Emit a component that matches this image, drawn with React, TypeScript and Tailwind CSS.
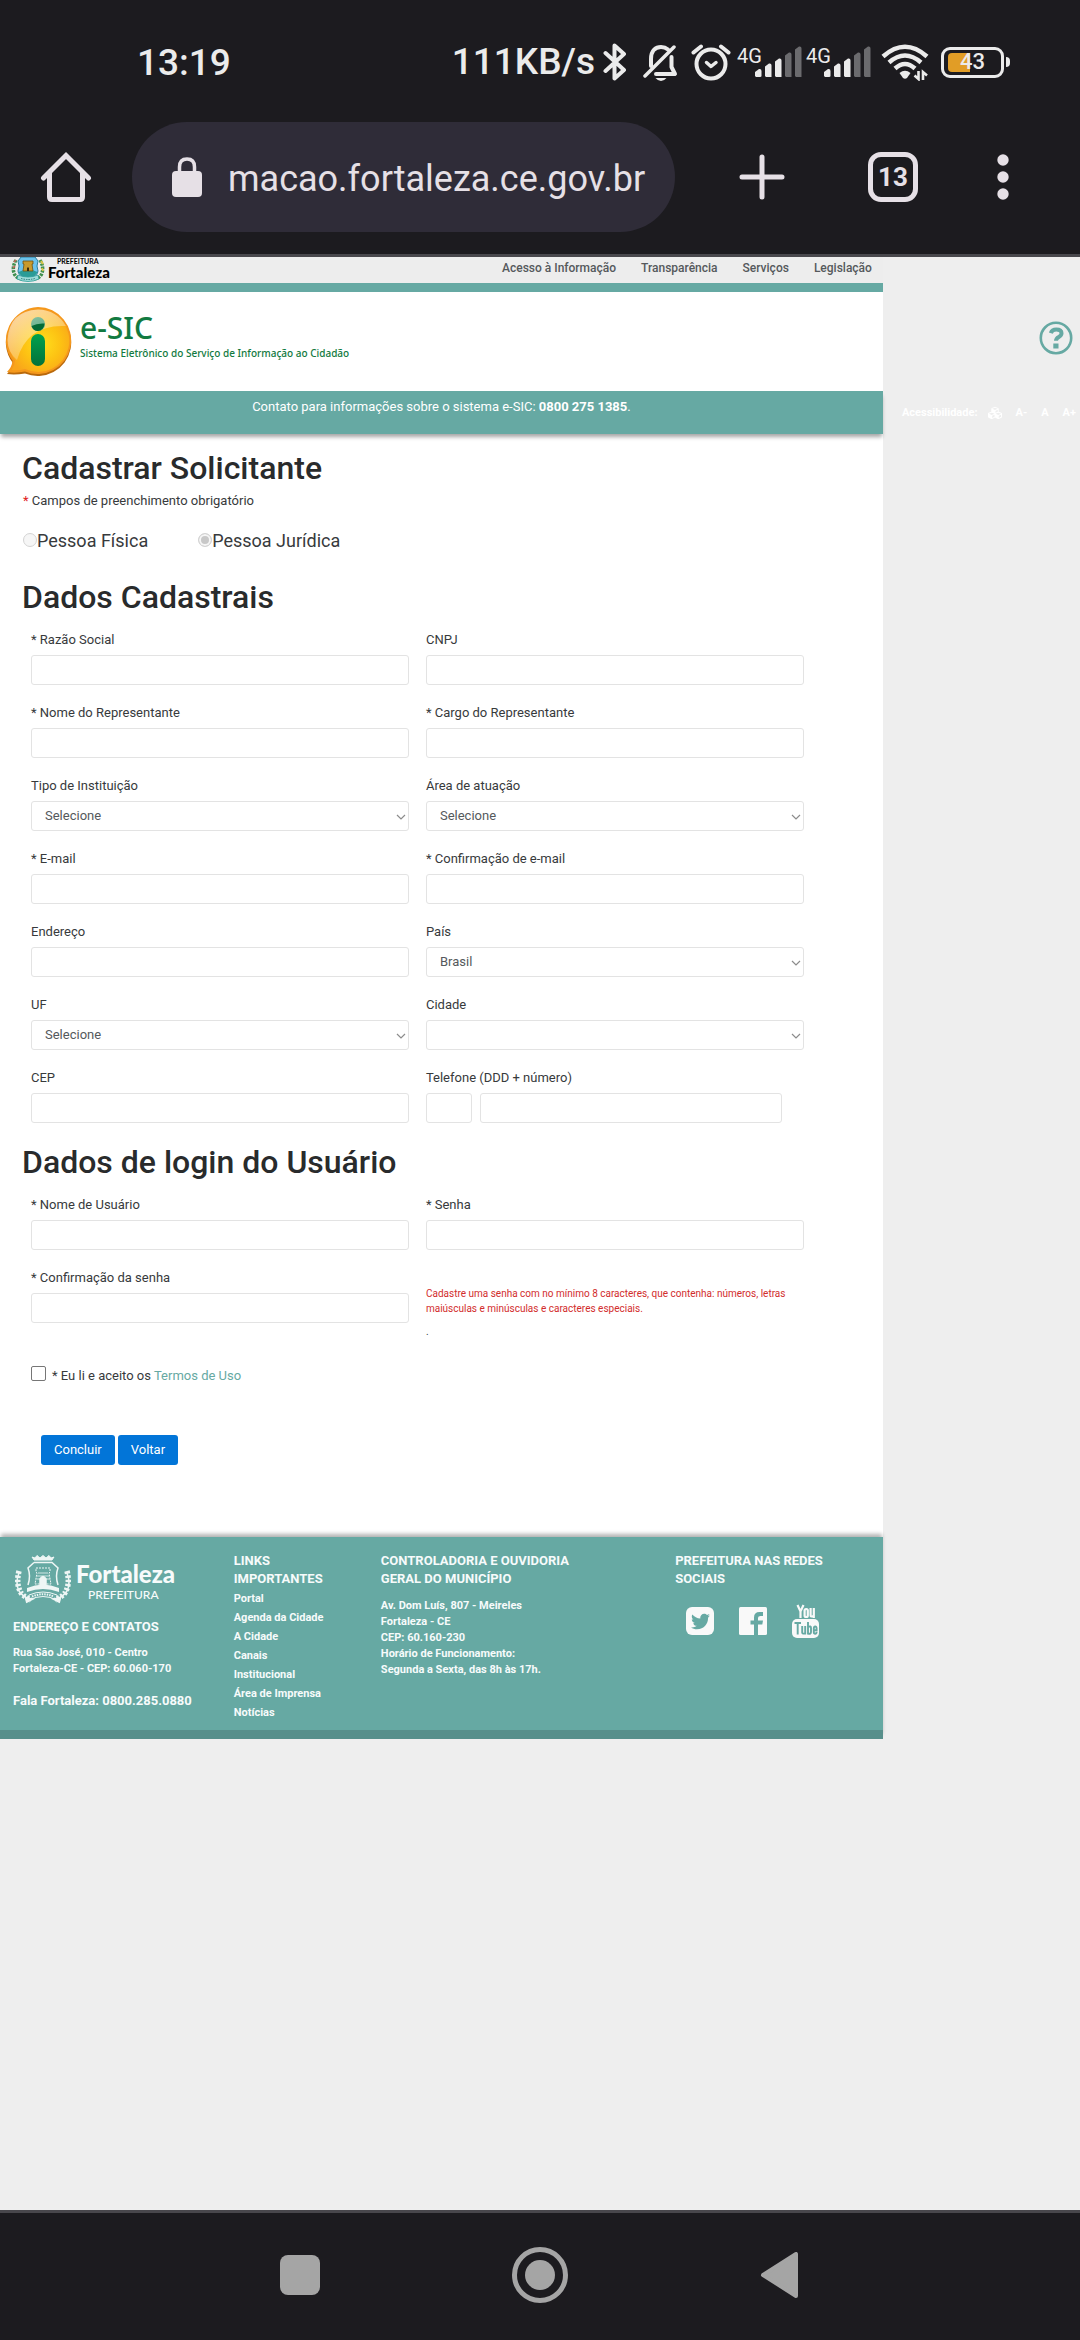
import { useId, type ReactNode } from "react";
import { FaCubes, FaTwitter } from "react-icons/fa";

const teal = "#66a9a3";

function Bluetooth() {
  return (
    <svg viewBox="0 0 24 40" className="ml-2 h-10 w-6 shrink-0" fill="none" stroke="#ebebeb" strokeWidth="4" strokeLinejoin="round" strokeLinecap="round">
      <path d="M2.5 11 L21 28 L11.5 36.500 V3.500 L21 12 L2.500 29" />
    </svg>
  );
}

function BellOff() {
  return (
    <svg viewBox="0 0 36 40" className="ml-4 h-10 w-9 shrink-0" fill="none" stroke="#ebebeb" strokeWidth="4" strokeLinecap="round" strokeLinejoin="round">
      <path d="M8 24 V17 C8 8 13 5 18 5 C21 5 23 5.800 25 7.500" />
      <path d="M31 5 L2 34" strokeWidth="3.500" />
      <path d="M28.500 15 V25 L32 32 H13" />
      <path d="M12.500 36 H23.500 Q21 39 18 39 T12.500 36 Z" fill="#ebebeb" stroke="none" />
    </svg>
  );
}

function Alarm() {
  return (
    <svg viewBox="0 0 40 40" className="ml-3 h-10 w-10 shrink-0" fill="none" stroke="#ebebeb" strokeWidth="4" strokeLinecap="round" strokeLinejoin="round">
      <circle cx="20" cy="22" r="14.500" />
      <path d="M2.500 10.500 L10 4.500 M37.500 10.500 L30 4.500" strokeWidth="4" />
      <path d="M15.500 20.500 L20 24.500 L25 20.500" strokeWidth="3.500" />
    </svg>
  );
}

function Signal() {
  return (
    <span className="ml-1.5 flex h-9 w-[63px] shrink-0 items-start">
      <span className="-mr-2 text-[20px] leading-6">4G</span>
      <svg viewBox="0 0 48 34" className="h-[34px] w-12 shrink-0">
        <path d="M1 32 V28 L5 25 Q7.500 24.500 7.500 27 V32 Q7.500 33 6 33 H2 Z" fill="#ebebeb" />
        <path d="M11 32 V22.500 L15 19.500 Q17.500 19 17.500 21.500 V33 H12 Z" fill="#ebebeb" />
        <path d="M21 32 V17.500 L25 14.500 Q27.500 14 27.500 16.500 V33 H22 Z" fill="#ebebeb" />
        <path d="M31 32 V11.500 L35 8.500 Q37.500 8 37.500 10.500 V33 H32 Z" fill="#6b6b6e" />
        <path d="M41 32 V5.500 L45 2.500 Q47.500 2 47.500 4.500 V33 H42 Z" fill="#6b6b6e" />
      </svg>
    </span>
  );
}

function Wifi() {
  return (
    <svg viewBox="0 0 48 38" className="ml-3 h-[38px] w-12 shrink-0" fill="none" stroke="#ebebeb" strokeWidth="4.500">
      <path d="M2 13.500 Q24 -6 46 13.500" />
      <path d="M8 19.500 Q24 5.500 40 19.500" />
      <path d="M14 25.500 Q24 16.500 34 25.500" />
      <path d="M18.500 30 Q24 25.500 29.500 30 L26 35 Q24 36.500 22 35 Z" fill="#ebebeb" stroke="none" />
      <path d="M37.500 28 V36 L33.500 32.500 M42 37 V29 L46 32.500" strokeWidth="2.600" />
    </svg>
  );
}

function Battery() {
  return (
    <span className="ml-3 flex items-center">
      <span className="relative flex h-[31px] w-[63px] items-center justify-center rounded-[9px] border-[3px] border-[#ebebeb] text-[22px] leading-none">
        <span className="absolute top-[3px] bottom-[3px] left-1 w-[22px] rounded-l-sm bg-[#e19d26]" />
        <span className="relative">43</span>
      </span>
      <span className="ml-0.5 h-2.5 w-1 rounded-r-sm bg-[#ebebeb]" />
    </span>
  );
}

function StatusBar() {
  return (
    <div className="flex h-[122px] items-start justify-between pt-[42px] pr-[70px] pl-[137px] font-medium text-[#ebebeb]">
      <span className="text-[37px] leading-[42px]">13:19</span>
      <div className="flex h-10 items-center">
        <span className="text-[37px] leading-[42px]">111KB/s</span>
        <Bluetooth />
        <BellOff />
        <Alarm />
        <span className="flex font-normal">
          <Signal />
          <Signal />
        </span>
        <Wifi />
        <Battery />
      </div>
    </div>
  );
}

function BrowserBar() {
  return (
    <div className="flex h-[132px] items-start text-[#e6e0e6]">
      <button type="button" aria-label="Página inicial" className="mt-[29px] ml-10">
        <svg viewBox="0 0 52 52" className="h-[52px] w-[52px]" fill="none" stroke="currentColor" strokeWidth="5" strokeLinejoin="round" strokeLinecap="round">
          <path d="M3.500 27 L26 4.500 L48.500 27" strokeLinejoin="miter" />
          <path d="M9.500 22 V46 Q9.500 48.500 12 48.500 H40 Q42.500 48.500 42.500 46 V22" />
        </svg>
      </button>
      <div className="ml-10 flex h-[110px] min-w-0 flex-1 items-center rounded-full bg-[#2f2c38] pr-4 pl-10">
        <svg viewBox="0 0 30 40" className="h-10 w-[30px] shrink-0">
          <path d="M7.500 16 V10 Q7.500 2 15 2 T22.500 10 V16" fill="none" stroke="currentColor" strokeWidth="3.500" />
          <rect x="0" y="14" width="30" height="26" rx="4" fill="currentColor" />
        </svg>
        <input
          type="text"
          aria-label="Endereço do site"
          defaultValue="macao.fortaleza.ce.gov.br"
          className="ml-[26px] min-w-0 flex-1 bg-transparent pt-1 text-[36px] leading-[44px] outline-none"
        />
      </div>
      <button type="button" aria-label="Nova guia" className="mt-8 ml-16">
        <svg viewBox="0 0 46 46" className="h-[46px] w-[46px]" fill="none" stroke="currentColor" strokeWidth="5" strokeLinecap="round">
          <path d="M23 3 V43 M3 23 H43" />
        </svg>
      </button>
      <button type="button" aria-label="Guias abertas" className="mt-[30px] ml-[83px] flex h-[50px] w-[50px] items-center justify-center rounded-[13px] border-[5px] border-current text-[26px] leading-none font-bold">
        13
      </button>
      <button type="button" aria-label="Mais opções" className="mt-8 mr-[70px] ml-[78px]">
        <svg viewBox="0 0 14 46" className="h-[46px] w-[14px]" fill="currentColor">
          <circle cx="7" cy="6" r="5.700" />
          <circle cx="7" cy="23" r="5.700" />
          <circle cx="7" cy="40" r="5.700" />
        </svg>
      </button>
    </div>
  );
}

function ColourCrest() {
  return (
    <svg viewBox="0 0 34 30" className="-mt-1 h-[30px] w-[34px] shrink-0">
      <path d="M5 7 Q1 14 3 20 Q5 26 13 26 M29 7 Q33 14 31 20 Q29 26 21 26" fill="none" stroke="#3f8f4e" strokeWidth="3.500" strokeDasharray="2.500 1" />
      <path d="M3 9 L5 7 M2 15 L4 13" stroke="#c8645a" strokeWidth="1.500" />
      <path d="M30 8 L32 11 M31 15 L32 18" stroke="#d9c545" strokeWidth="2" />
      <path d="M10 4 H24 L27 8 Q25 13 27 18 Q27 23 17 25 Q7 23 7 18 Q9 13 7 8 Z" fill="#6cc3ec" stroke="#2c7f9c" strokeWidth="1" />
      <path d="M7.500 19 Q17 14 26.500 19 Q25 23 17 25 Q9 23 7.500 19 Z" fill="#2a9c97" />
      <path d="M12 8 H22 V11 H21 L22 18 H12 L13 11 H12 Z" fill="#c99a2c" stroke="#6e5314" strokeWidth=".8" />
      <path d="M16 18 V15 Q17 13.500 18 15 V18 Z" fill="#3d2c0a" />
      <path d="M7 22 Q17 26 27 22 L28 26 Q17 31 6 26 Z" fill="#9fdcda" stroke="#2a9c97" strokeWidth=".8" />
      <path d="M10 25.500 Q17 27.500 24 25.500" fill="none" stroke="#247a77" strokeWidth="1" strokeDasharray="1.500 1" />
    </svg>
  );
}

function WhiteCrest() {
  return (
    <svg viewBox="0 0 60 50" className="h-[50px] w-[60px] shrink-0" fill="none" stroke="#eef6f5" strokeWidth="1.500">
      <path d="M19 3 L21 6 H39 L41 3 L38 4 L36 1.500 L33 4 L30 1.500 L27 4 L24 1.500 L22 4 Z" fill="#eef6f5" strokeWidth="1" />
      <path d="M21 8.500 H39 L45 14 Q42 22 45 31 M21 8.500 L15 14 Q18 22 15 31" />
      <path d="M23 14 H37 V18 L36 19 L38 30 H22 L24 19 L23 18 Z" strokeWidth="1" strokeDasharray="2 1" />
      <path d="M25 19 H35 M24 22 H36 M23.500 25 H27 M33 25 H37" strokeWidth=".8" />
      <path d="M27 31 V25 Q30 20 33 25 V31 Z" fill="#eef6f5" />
      <path d="M14 34 Q30 27 46 34 V38 Q30 32 14 38 Z" fill="#eef6f5" stroke="none" />
      <path d="M16 41 Q30 35 44 41 V46 Q30 39 16 46 Z" strokeWidth="1" />
      <path d="M19 42.500 Q30 38 41 42.500" strokeWidth="2" strokeDasharray="1.500 1" />
      <path d="M6 19 Q2 29 6 37 Q9 42 18 46 M54 19 Q58 29 54 37 Q51 42 42 46" strokeWidth="1.500" />
      <path d="M6 17 Q3 29 7 37 Q9 42 18 46 M54 17 Q57 29 53 37 Q51 42 42 46" strokeWidth="5.500" strokeDasharray="2.500 1.800" />
      <path d="M12 44 L20 45 L13 48.500 M48 44 L40 45 L47 48.500" fill="#eef6f5" />
    </svg>
  );
}

function InfoBubble() {
  return (
    <svg viewBox="0 0 70 70" className="h-[70px] w-[70px] shrink-0">
      <defs>
        <radialGradient id="bubble" cx=".55" cy=".55" r=".55">
          <stop offset="0" stopColor="#ffdf1c" />
          <stop offset=".55" stopColor="#fdc213" />
          <stop offset="1" stopColor="#f9a51a" />
        </radialGradient>
        <linearGradient id="stem" x1="0" y1="0" x2="0" y2="1">
          <stop offset="0" stopColor="#00a24d" />
          <stop offset="1" stopColor="#04713a" />
        </linearGradient>
        <linearGradient id="gloss" x1="0" y1="0" x2=".6" y2="1">
          <stop offset="0" stopColor="#fff" stopOpacity=".65" />
          <stop offset="1" stopColor="#fff" stopOpacity=".15" />
        </linearGradient>
      </defs>
      <path d="M35 3 A33.500 33.500 0 1 1 22 67.500 Q12 69 4 68 Q9 63 9.500 56.500 A33.500 33.500 0 0 1 35 3 Z" fill="#b9690c" />
      <path d="M35 1 A33.500 33.500 0 1 1 22 65.500 Q12 67.500 4 66 Q9 61 9.500 54.500 A33.500 33.500 0 0 1 35 1 Z" fill="#f5981c" />
      <path d="M35 3.500 A31.200 31.200 0 1 1 22 63 Q15 65 8.500 64 Q12 59 12 54 A31.200 31.200 0 0 1 35 3.500 Z" fill="url(#bubble)" />
      <circle cx="35" cy="18" r="7" fill="#0a8043" />
      <rect x="28" y="28" width="14" height="32" rx="7" fill="url(#stem)" />
      <path d="M35 3.500 Q54 4 63 20 Q24 18 14 54 Q4.500 46 4.500 34 Q6 5 35 3.500 Z" fill="url(#gloss)" />
      <path d="M28.500 20 Q34 17 41.500 17.500 A7 7 0 0 1 35 25 A7 7 0 0 1 28.500 20 Z" fill="#046b36" />
    </svg>
  );
}

function SiteHeader() {
  const links = ["Acesso à Informação", "Transparência", "Serviços", "Legislação"];
  return (
    <header>
      <div className="flex h-[26px] items-start justify-between bg-[#ededed] px-[11px]">
        <a href="#inicio" aria-label="Prefeitura de Fortaleza" className="flex h-[26px] overflow-hidden text-black">
          <ColourCrest />
          <span className="ml-[3px] flex flex-col font-['Lato']">
            <span className="ml-[9px] text-[7px] leading-[9px] font-bold">PREFEITURA</span>
            <span className="text-[15px] leading-3 font-black">Fortaleza</span>
          </span>
        </a>
        <nav className="flex gap-[25px] text-[12px] leading-[22px] font-medium text-[#55595c]">
          {links.map((l) => (
            <a key={l} href="#menu">{l}</a>
          ))}
        </nav>
      </div>
      <div className="h-[9px] bg-[#66a9a3]" />
      <div className="flex h-[99px] items-start bg-white pt-[14px] pl-[3px]">
        <InfoBubble />
        <div className="ml-[7px] flex flex-col pt-[3px] font-['Noto_Sans'] text-[#127a41]">
          <span className="text-[30px] leading-[38px] font-medium">e-SIC</span>
          <span className="text-[10px] leading-3 font-medium">Sistema Eletrônico do Serviço de Informação ao Cidadão</span>
        </div>
      </div>
      <p className="relative h-[43px] bg-[#66a9a3] text-center text-[13px] leading-8 text-white shadow-[0_4px_4px_-1px_rgba(0,0,0,0.35)]">
        Contato para informações sobre o sistema e-SIC: <strong>0800 275 1385</strong>.
      </p>
    </header>
  );
}

const control = "h-[30px] w-full rounded-[3px] border border-[#e3e3e3] bg-white px-[13px] text-[13px] text-[#55595c]";

function Field({ label, type = "text" }: { label: string; type?: string }) {
  const id = useId();
  return (
    <div className="flex flex-col gap-[5px]">
      <label htmlFor={id} className="leading-5">{label}</label>
      <input id={id} type={type} className={control} />
    </div>
  );
}

function SelectField({ label, value }: { label: string; value: string }) {
  const id = useId();
  return (
    <div className="flex flex-col gap-[5px]">
      <label htmlFor={id} className="leading-5">{label}</label>
      <div className="relative">
        <select id={id} className={control + " block appearance-none"}>
          <option>{value}</option>
        </select>
        <svg viewBox="0 0 10 6" className="pointer-events-none absolute top-[13px] right-[3px] h-1.5 w-2.5" fill="none" stroke="#8c8c8c" strokeWidth="1.200">
          <path d="M1 1 L5 5 L9 1" />
        </svg>
      </div>
    </div>
  );
}

function PhoneField() {
  const id = useId();
  return (
    <div className="flex flex-col gap-[5px]">
      <label htmlFor={id} className="leading-5">Telefone (DDD + número)</label>
      <div className="flex gap-2 pr-[22px]">
        <span className="w-[46px] shrink-0">
          <input id={id} type="text" aria-label="DDD" className={control} />
        </span>
        <input type="text" aria-label="Número" className={control} />
      </div>
    </div>
  );
}

function Heading({ children }: { children: ReactNode }) {
  return <h2 className="pl-[22px] text-[32px] leading-9 font-medium text-[#292b2c]">{children}</h2>;
}

function RadioOption({ label, checked = false }: { label: string; checked?: boolean }) {
  return (
    <label className="flex items-center text-[18px] leading-7">
      <input
        type="radio"
        name="tipo"
        defaultChecked={checked}
        disabled
        className="mb-0.5 h-[14px] w-[14px] appearance-none rounded-full border border-[#d4d4d4] bg-[#f6f6f6] checked:bg-[#c8c8c8] checked:shadow-[inset_0_0_0_2px_#f6f6f6]"
      />
      {label}
    </label>
  );
}

function RegistrationForm() {
  return (
    <form className="pt-4 pb-[72px] text-[13px] text-[#373a3c]">
      <Heading>Cadastrar Solicitante</Heading>
      <p className="mt-[3px] pl-[23px] leading-6">
        <span className="text-[#e02020]">*</span> Campos de preenchimento obrigatório
      </p>
      <div className="mt-[14px] flex gap-[50px] pl-[23px]">
        <RadioOption label="Pessoa Física" />
        <RadioOption label="Pessoa Jurídica" checked />
      </div>
      <div className="mt-6">
        <Heading>Dados Cadastrais</Heading>
      </div>
      <div className="mt-[15px] mr-[79px] ml-[31px] grid grid-cols-2 gap-x-[17px] gap-y-[18px]">
        <Field label="* Razão Social" />
        <Field label="CNPJ" />
        <Field label="* Nome do Representante" />
        <Field label="* Cargo do Representante" />
        <SelectField label="Tipo de Instituição" value="Selecione" />
        <SelectField label="Área de atuação" value="Selecione" />
        <Field label="* E-mail" type="email" />
        <Field label="* Confirmação de e-mail" type="email" />
        <Field label="Endereço" />
        <SelectField label="País" value="Brasil" />
        <SelectField label="UF" value="Selecione" />
        <SelectField label="Cidade" value="" />
        <Field label="CEP" />
        <PhoneField />
      </div>
      <div className="mt-[21px]">
        <Heading>Dados de login do Usuário</Heading>
      </div>
      <div className="mt-[15px] mr-[79px] ml-[31px] grid grid-cols-2 gap-x-[17px] gap-y-[18px]">
        <Field label="* Nome de Usuário" />
        <Field label="* Senha" type="password" />
        <Field label="* Confirmação da senha" type="password" />
        <div className="pt-[18px] text-[10px]">
          <p className="leading-[15px] text-[#d22c2c]">
            Cadastre uma senha com no mínimo 8 caracteres, que contenha: números, letras maiúsculas e minúsculas e caracteres especiais.
          </p>
          <p className="mt-1.5 leading-5">.</p>
        </div>
      </div>
      <div className="mt-6 ml-[31px] flex items-start">
        <input id="termos" type="checkbox" className="h-[15px] w-[15px] appearance-none rounded-[2px] border border-[#767676] bg-white" />
        <label htmlFor="termos" className="ml-[6px] leading-5">
          * Eu li e aceito os <a href="#termos-de-uso" className="text-[#66a9a3]">Termos de Uso</a>
        </label>
      </div>
      <div className="mt-[49px] ml-[41px] flex gap-[3px] text-white">
        <button type="submit" className="h-[30px] rounded-[3px] bg-[#0275d8] px-[13px]">Concluir</button>
        <button type="button" className="h-[30px] rounded-[3px] bg-[#0275d8] px-[13px]">Voltar</button>
      </div>
    </form>
  );
}

function SiteFooter() {
  const links = ["Portal", "Agenda da Cidade", "A Cidade", "Canais", "Institucional", "Área de Imprensa", "Notícias"];
  return (
    <footer className="relative grid h-[202px] grid-cols-12 border-b-[9px] border-[#578f8b] bg-[#66a9a3] pt-[15px] text-[13px] leading-[18px] font-bold text-[#f7fbfb] shadow-[0_-4px_4px_-1px_rgba(0,0,0,0.3)]">
      <div className="col-span-3 pl-[13px]">
        <div className="flex pt-0.5">
          <WhiteCrest />
          <div className="ml-[3px] flex flex-col font-['Lato']">
            <span className="mt-1.5 text-[24px] leading-7 font-black">Fortaleza</span>
            <span className="ml-3 text-[12px] leading-[14px] font-medium">PREFEITURA</span>
          </div>
        </div>
        <h3 className="mt-[14px]">ENDEREÇO E CONTATOS</h3>
        <p className="mt-[9px] text-[11px] leading-4">
          Rua São José, 010 - Centro
          <br />
          Fortaleza-CE - CEP: 60.060-170
        </p>
        <p className="mt-[15px]">Fala Fortaleza: 0800.285.0880</p>
      </div>
      <div className="col-span-2 pl-[13px]">
        <h3>
          LINKS
          <br />
          IMPORTANTES
        </h3>
        <ul className="mt-px text-[11px] leading-[19px]">
          {links.map((l) => (
            <li key={l}>
              <a href="#link">{l}</a>
            </li>
          ))}
        </ul>
      </div>
      <div className="col-span-4 pl-[13px]">
        <h3 className="w-[200px]">CONTROLADORIA E OUVIDORIA GERAL DO MUNICÍPIO</h3>
        <p className="mt-2.5 text-[11px] leading-4">
          Av. Dom Luís, 807 - Meireles
          <br />
          Fortaleza - CE
          <br />
          CEP: 60.160-230
          <br />
          Horário de Funcionamento:
          <br />
          Segunda a Sexta, das 8h às 17h.
        </p>
      </div>
      <div className="col-span-3 pl-[13px]">
        <h3 className="w-[160px]">PREFEITURA NAS REDES SOCIAIS</h3>
        <div className="mt-4 flex h-[34px] items-center gap-[25px] pl-[11px]">
          <a href="#twitter" aria-label="Twitter" className="flex h-7 w-7 items-center justify-center rounded-[6px] bg-[#f9f9f9] text-[#66a9a3]">
            <FaTwitter size={19} />
          </a>
          <a href="#facebook" aria-label="Facebook">
            <svg viewBox="0 0 28 28" className="h-7 w-7">
              <rect width="28" height="28" rx="1.500" fill="#f9f9f9" />
              <path d="M15 28 V17.500 H11.500 V13.500 H15 V10.500 Q15 5 20.500 5 H24 V9 H21.500 Q19 9 19 11 V13.500 H24 L23.300 17.500 H19 V28 Z" fill={teal} />
            </svg>
          </a>
          <a href="#youtube" aria-label="YouTube">
            <svg viewBox="0 0 28 34" className="h-[34px] w-7" fill="none" stroke="#f9f9f9" strokeWidth="2.200">
              <path d="M5.500 1 L8.500 7.500 L11.500 1 M8.500 7 V14" />
              <rect x="12.600" y="5" width="3.200" height="8" rx="1.500" />
              <path d="M18.600 4 V11.500 Q18.600 13.200 21.600 12 M21.800 4 V14" />
              <rect x="0" y="15" width="27" height="19" rx="5" fill="#f9f9f9" stroke="none" />
              <g stroke={teal} strokeWidth="1.900">
                <path d="M2.500 19 H9 M5.700 19 V30.500" />
                <path d="M10.200 22 V28.500 Q10.500 30.500 13.200 29 M13.200 22 V30.500" />
                <path d="M16 18 V30.500 M16 23 Q19 21.500 19 24 V28 Q19 30.500 16 29.500" />
                <path d="M21.800 26.300 H24.600 V24.500 Q24.500 22.500 23.200 22.500 T21.800 24.500 V28 Q21.800 29.800 23.200 29.800 T24.600 27.800" />
              </g>
            </svg>
          </a>
        </div>
      </div>
    </footer>
  );
}

function SideTools() {
  return (
    <aside className="flex min-w-0 flex-1 flex-col items-end">
      <a href="#ajuda" aria-label="Ajuda" className="mt-16 mr-[7px]">
        <svg viewBox="0 0 34 34" className="h-[34px] w-[34px]" fill="none" stroke={teal}>
          <circle cx="17" cy="17" r="15.200" strokeWidth="2.600" />
          <path d="M11.800 12.200 Q13 8.500 17.300 8.500 Q22.500 8.500 22.500 12.300 Q22.500 14.500 19.800 16 Q17 17.500 17 19.800" strokeWidth="4" />
          <path d="M14.300 22.500 H19.500 V27.500 H14.300 Z" fill={teal} stroke="none" />
        </svg>
      </a>
      <div className="mt-[47px] flex items-center pr-1 text-[11px] leading-[22px] font-bold text-white">
        <span>Acessibilidade:</span>
        <button type="button" aria-label="Alto contraste" className="ml-[11px]">
          <FaCubes size={14} />
        </button>
        <button type="button" className="ml-[13px]">A-</button>
        <button type="button" className="ml-[14px]">A</button>
        <button type="button" className="ml-[14px]">A+</button>
      </div>
    </aside>
  );
}

function AndroidNav() {
  return (
    <nav className="flex h-[130px] items-center justify-center gap-[192px] border-t-[3px] border-[#48474c] bg-[#1c1b1f] pb-[3px]">
      <button type="button" aria-label="Recentes" className="h-10 w-10 rounded-[8px] bg-[#a5a5a5]" />
      <button type="button" aria-label="Início" className="flex h-14 w-14 items-center justify-center rounded-full border-[5px] border-[#a5a5a5]">
        <span className="h-[30px] w-[30px] rounded-full bg-[#a5a5a5]" />
      </button>
      <button type="button" aria-label="Voltar">
        <svg viewBox="0 0 40 46" className="h-[46px] w-10" fill="#a5a5a5" stroke="#a5a5a5" strokeWidth="4" strokeLinejoin="round">
          <path d="M3 23 L36 2 V44 Z" />
        </svg>
      </button>
    </nav>
  );
}

export default function App() {
  return (
    <div className="flex min-h-screen flex-col bg-[#eeeeee] font-['Roboto',sans-serif]">
      <div className="border-b-[3px] border-[#48474c] bg-[#1c1b1f]">
        <StatusBar />
        <BrowserBar />
      </div>
      <div className="flex flex-1 items-start">
        <main className="w-[81.75%] bg-white">
          <SiteHeader />
          <RegistrationForm />
          <SiteFooter />
        </main>
        <SideTools />
      </div>
      <AndroidNav />
    </div>
  );
}
